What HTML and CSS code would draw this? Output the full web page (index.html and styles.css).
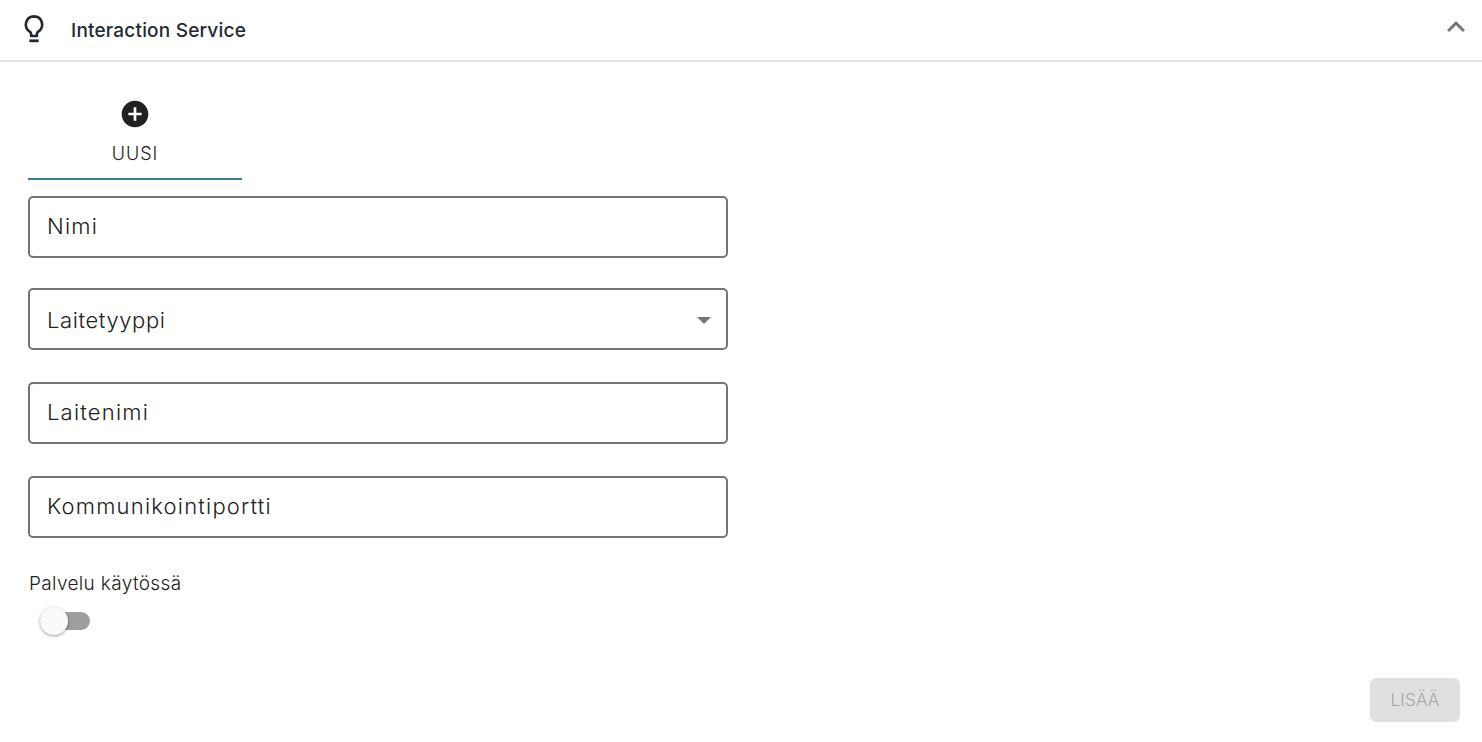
FILE: index.html
```html
<!DOCTYPE html>
<html lang="fi">
<head>
  <meta charset="UTF-8" />
  <title>Interaction Service</title>
  <link rel="stylesheet" href="styles.css">
</head>
<body>

  <!-- OTSIKKO -->
  <header class="otsikko">
    <svg class="lamppu" width="24" height="30" viewBox="0 0 24 30">
      <path d="M12 3.4a8.2 8.2 0 0 0-4.2 15.2c.9.6 1.3 1.4 1.3 2.4v2h5.8v-2c0-1 .4-1.8 1.3-2.4A8.2 8.2 0 0 0 12 3.4z" fill="none" stroke="#1f2a33" stroke-width="2.6" stroke-linejoin="round"/>
      <rect x="7.4" y="26.4" width="9.2" height="2.8" fill="#1f2a33"/>
    </svg>
    <h1>Interaction Service</h1>
    <svg class="nuoli" width="36" height="36" viewBox="0 0 24 24">
      <path d="M7.41 15.41 12 10.83l4.59 4.58L18 14l-6-6-6 6z" fill="#757575"/>
    </svg>
  </header>

  <main class="sisalto">
    <!-- VALILEHTI -->
    <div class="tab">
      <svg width="32" height="32" viewBox="0 0 24 24">
        <path d="M12 2C6.48 2 2 6.48 2 12s4.48 10 10 10 10-4.48 10-10S17.52 2 12 2zm5 11h-4v4h-2v-4H7v-2h4V7h2v4h4v2z" fill="#212121"/>
      </svg>
      <span>UUSI</span>
    </div>

    <!-- LOMAKE -->
    <div class="kentta eka">Nimi</div>
    <div class="kentta valinta">
      Laitetyyppi
      <span class="kolmio"></span>
    </div>
    <div class="kentta">Laitenimi</div>
    <div class="kentta">Kommunikointiportti</div>

    <div class="kytkin-otsikko">Palvelu käytössä</div>
    <div class="kytkin">
      <span class="ura"></span>
      <span class="nuppi"></span>
    </div>

    <div class="toiminnot">
      <button disabled>LISÄÄ</button>
    </div>
  </main>

</body>
</html>
```

FILE: styles.css
```css
body {
  margin: 0;
  font-family: 'Inter', 'Liberation Sans', sans-serif;
  background: #fff;
  color: #212121;
  overflow: hidden;
}
.otsikko {
  height: 60px;
  display: flex;
  align-items: center;
  padding: 0 8px 0 22px;
  border-bottom: 2px solid #e4e4e4;
}
.lamppu {
  margin-top: -4px;
}
.otsikko h1 {
  flex: 1;
  margin: 0 0 0 25px;
  font-size: 19px;
  font-weight: 500;
  letter-spacing: 0.2px;
  color: #1f2a33;
}
.nuoli {
  margin-top: -6px;
}
.sisalto {
  padding: 0 22px 0 28px;
}
.tab {
  width: 214px;
  height: 118px;
  box-sizing: border-box;
  padding-top: 36px;
  display: flex;
  flex-direction: column;
  align-items: center;
  border-bottom: 2px solid #3f7a8a;
  font-size: 18px;
  font-weight: 350;
  letter-spacing: 1px;
}
.tab span {
  margin-top: 13px;
}
.kentta {
  width: 700px;
  height: 62px;
  box-sizing: border-box;
  margin-top: 32px;
  padding: 0 17px 2px;
  display: flex;
  align-items: center;
  border: 2px solid #757575;
  border-radius: 5px;
  font-size: 22px;
  font-weight: 350;
  letter-spacing: 1.2px;
  line-height: 1;
}
.eka {
  margin-top: 16px;
}
.valinta {
  margin-top: 30px;
  padding-bottom: 0;
  padding-top: 2px;
  justify-content: space-between;
  letter-spacing: 0.6px;
}
.kolmio {
  width: 0;
  height: 0;
  margin-right: -2px;
  border-left: 7px solid transparent;
  border-right: 7px solid transparent;
  border-top: 7px solid #757575;
}
.kytkin-otsikko {
  margin: 36px 0 0 1px;
  font-size: 19px;
  font-weight: 350;
  letter-spacing: 0.35px;
  line-height: 20px;
}
.kytkin {
  position: relative;
  width: 64px;
  height: 28px;
  margin-top: 13px;
}
.ura {
  position: absolute;
  left: 12px;
  top: 5px;
  width: 50px;
  height: 18px;
  border-radius: 9px;
  background: #9e9e9e;
}
.nuppi {
  position: absolute;
  left: 12px;
  top: 0;
  width: 28px;
  height: 28px;
  border-radius: 50%;
  background: #fafafa;
  box-shadow: 0 1px 3px rgba(0,0,0,0.4);
}
.toiminnot {
  display: flex;
  justify-content: flex-end;
  margin-top: 43px;
}
button {
  width: 90px;
  height: 44px;
  border: none;
  border-radius: 6px;
  background: #e0e0e0;
  color: #a6a6a6;
  font-family: inherit;
  font-size: 17px;
  font-weight: 350;
  letter-spacing: 0.2px;
}
```
